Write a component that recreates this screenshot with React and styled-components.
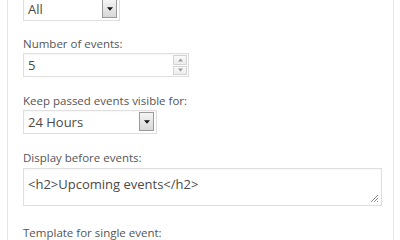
import React from 'react';
import styled, { createGlobalStyle } from 'styled-components';

const GlobalStyle = createGlobalStyle`
  html, body {
    margin: 0;
    padding: 0;
    background: #ffffff;
    overflow: hidden;
  }
  body {
    font-family: 'Open Sans', 'Liberation Sans', sans-serif;
  }
`;

const Panel = styled.div`
  margin-left: 7px;
  width: 387px;
  height: 240px;
  border-left: 1px solid #e6e6e6;
  border-right: 1px solid #e6e6e6;
  box-sizing: border-box;
  padding: 0 0 0 15px;
  overflow: hidden;
`;

const Content = styled.div`
  margin-top: -3px;
  display: flex;
  flex-direction: column;
`;

const Field = styled.div`
  display: flex;
  flex-direction: column;
  margin-bottom: ${p => p.gap || 16}px;
`;

const Label = styled.div`
  font-size: 11.5px;
  line-height: 16px;
  color: #555;
  margin-bottom: ${p => p.space || 1}px;
`;

const Box = styled.div`
  display: flex;
  align-items: stretch;
  width: ${p => p.width}px;
  height: ${p => p.height}px;
  box-sizing: border-box;
  border: 1px solid #dfdfdf;
  background: #fff;
  box-shadow: inset 0 1px 2px rgba(0, 0, 0, 0.04);
`;

const Value = styled.div`
  flex: 1;
  font-size: 13px;
  color: #4a4a4a;
  padding: ${p => (p.top ? '7px 4px 0' : '0 4px')};
  display: flex;
  align-items: ${p => (p.top ? 'flex-start' : 'center')};
  line-height: 16px;
`;

const DropButton = styled.div`
  width: 15px;
  margin: 1px 2px 2px 0;
  box-sizing: border-box;
  border: 1px solid #9a9a9a;
  background: linear-gradient(#f4f4f4, #d8d8d8);
  display: flex;
  align-items: center;
  justify-content: center;
`;

const Spinner = styled.div`
  width: 14px;
  margin: 1px 1px 1px 0;
  display: flex;
  flex-direction: column;
  gap: 1px;
`;

const SpinPart = styled.div`
  flex: 1;
  border: 1px solid #d4d4d4;
  background: linear-gradient(#fafafa, #ececec);
  display: flex;
  align-items: center;
  justify-content: center;
`;

const Grip = styled.svg`
  align-self: flex-end;
  margin: 0 2px 2px 0;
`;

const Caret = ({ up, color = '#111', w = 7 }) => (
  <svg width={w} height="4" viewBox="0 0 7 4">
    {up ? (
      <polygon points="0,4 7,4 3.5,0" fill={color} />
    ) : (
      <polygon points="0,0 7,0 3.5,4" fill={color} />
    )}
  </svg>
);

const Select = ({ width, value }) => (
  <Box width={width} height={24}>
    <Value>{value}</Value>
    <DropButton>
      <Caret w={6} />
    </DropButton>
  </Box>
);

const App = () => (
  <>
    <GlobalStyle />
    <Panel>
      <Content>
        <Field gap={15}>
          <Select width={97} value="All" />
        </Field>
        <Field>
          <Label>Number of events:</Label>
          <Box width={166} height={24}>
            <Value>5</Value>
            <Spinner>
              <SpinPart>
                <Caret up color="#999" w={5} />
              </SpinPart>
              <SpinPart>
                <Caret color="#999" w={5} />
              </SpinPart>
            </Spinner>
          </Box>
        </Field>
        <Field>
          <Label>Keep passed events visible for:</Label>
          <Select width={134} value="24 Hours" />
        </Field>
        <Field gap={19}>
          <Label space={2}>Display before events:</Label>
          <Box width={359} height={38}>
            <Value top>&lt;h2&gt;Upcoming events&lt;/h2&gt;</Value>
            <Grip width="9" height="9" viewBox="0 0 9 9">
              <line x1="1" y1="8" x2="8" y2="1" stroke="#888" strokeWidth="1" />
              <line x1="4" y1="8" x2="8" y2="4" stroke="#888" strokeWidth="1" />
              <line x1="7" y1="8" x2="8" y2="7" stroke="#888" strokeWidth="1" />
            </Grip>
          </Box>
        </Field>
        <Field>
          <Label space={3}>Template for single event:</Label>
          <Box width={359} height={38} />
        </Field>
      </Content>
    </Panel>
  </>
);

export default App;
